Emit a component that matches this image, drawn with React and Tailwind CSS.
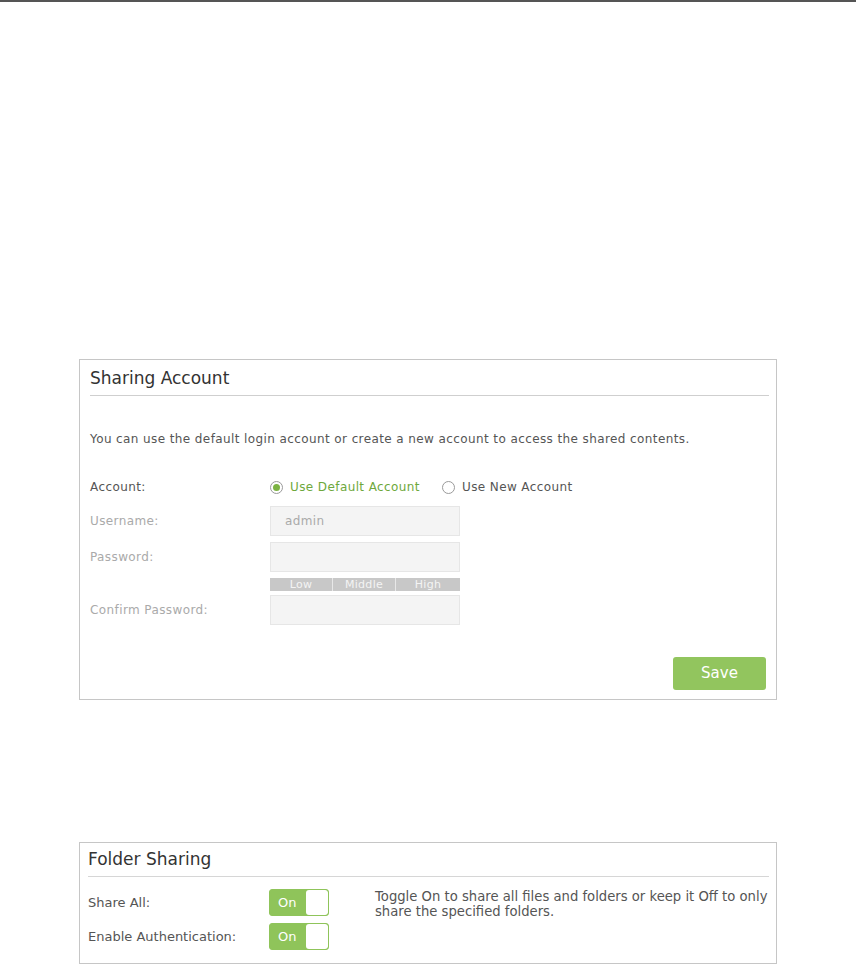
import React from "react";

const V = { fontFamily: '"DejaVu Sans", Verdana, sans-serif' };

function Radio({ checked }) {
  return (
    <span className="w-[13px] h-[13px] rounded-full border border-[#9a9a9a] bg-white flex items-center justify-center shrink-0">
      {checked && <span className="w-[7px] h-[7px] rounded-full bg-[#7cb342]" />}
    </span>
  );
}

function Toggle() {
  return (
    <div className="w-[60px] h-[27px] rounded-[3px] border border-[#8fc45a] bg-[#8fc45a] flex overflow-hidden">
      <div className="w-[36px] flex items-center pl-[8px] text-white text-[13px]">On</div>
      <div className="flex-1 bg-white rounded-[3px]" />
    </div>
  );
}

export default function App() {
  return (
    <div className="w-[856px] h-[964px] bg-white flex flex-col" style={V}>
      <div className="h-[2px] bg-[#555]" />
      {/* Sharing Account panel */}
      <div className="mt-[357px] ml-[79px] w-[698px] h-[342px] border border-[#c6c6c6] flex flex-col pl-[10px] pr-[7px] text-[12px] tracking-[0.4px]">
        <div className="h-[36px] border-b border-[#cfcfcf] flex items-end pb-[6px]">
          <span className="text-[17px] leading-[22px] text-[#333] tracking-normal">Sharing Account</span>
        </div>
        <div className="mt-[35px] leading-[16px] text-[#555]">
          You can use the default login account or create a new account to access the shared contents.
        </div>
        <div className="mt-[30px] flex items-center h-[20px]">
          <div className="w-[180px] text-[#555]">Account:</div>
          <Radio checked />
          <span className="ml-[7px] text-[#6ea83c]">Use Default Account</span>
          <span className="ml-[22px]"><Radio /></span>
          <span className="ml-[7px] text-[#555]">Use New Account</span>
        </div>
        <div className="mt-[9px] flex items-center h-[30px]">
          <div className="w-[180px] text-[#aaa]">Username:</div>
          <div className="w-[190px] h-[30px] bg-[#f4f4f4] border border-[#e6e6e6] flex items-center pl-[14px] text-[#aaa]">admin</div>
        </div>
        <div className="mt-[6px] flex items-center h-[30px]">
          <div className="w-[180px] text-[#aaa]">Password:</div>
          <div className="w-[190px] h-[30px] bg-[#f4f4f4] border border-[#e6e6e6]" />
        </div>
        <div className="mt-[6px] flex h-[13px]">
          <div className="w-[180px]" />
          <div className="w-[190px] flex bg-[#c8c8c8] text-[11px] leading-[13px] text-[#f4f4f4] tracking-[0.3px]">
            <div className="w-[63px] text-center border-r border-[#e8e8e8]">Low</div>
            <div className="w-[63px] text-center border-r border-[#e8e8e8]">Middle</div>
            <div className="flex-1 text-center">High</div>
          </div>
        </div>
        <div className="mt-[4px] flex items-center h-[30px]">
          <div className="w-[180px] text-[#aaa]">Confirm Password:</div>
          <div className="w-[190px] h-[30px] bg-[#f4f4f4] border border-[#e6e6e6]" />
        </div>
        <div className="mt-[32px] flex justify-end pr-[3px]">
          <button className="w-[93px] h-[33px] rounded-[3px] bg-[#92c55e] text-white text-[15px] tracking-normal">Save</button>
        </div>
      </div>
      {/* Folder Sharing panel */}
      <div className="mt-[142px] ml-[79px] w-[698px] h-[122px] border border-[#c6c6c6] flex flex-col pl-[8px] pr-[7px]">
        <div className="h-[34px] border-b border-[#d6d6d6] flex items-end pb-[6px]">
          <span className="text-[17px] leading-[22px] text-[#333]">Folder Sharing</span>
        </div>
        <div className="mt-[12px] flex">
          <div className="flex flex-col gap-[7px]">
            <div className="flex items-center h-[27px]">
              <div className="w-[181px] text-[13px] text-[#555]">Share All:</div>
              <Toggle />
            </div>
            <div className="flex items-center h-[27px]">
              <div className="w-[181px] text-[13px] text-[#555]">Enable Authentication:</div>
              <Toggle />
            </div>
          </div>
          <div className="ml-[46px] mt-[0px] text-[13.2px] leading-[15px] text-[#555] w-[410px]">
            Toggle On to share all files and folders or keep it Off to only share the specified folders.
          </div>
        </div>
      </div>
    </div>
  );
}
